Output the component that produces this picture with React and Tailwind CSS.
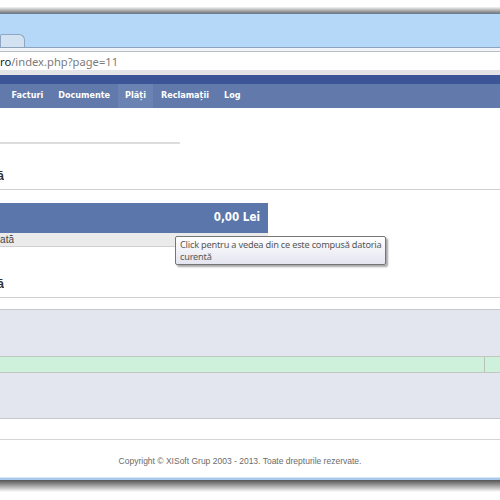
import React from 'react';

const navItems = ['Facturi', 'Documente', 'Plăți', 'Reclamații', 'Log'];

const Cut = ({ text, width, className }) => (
    <div className={`flex justify-end overflow-hidden ${width}`}>
        <span className={`whitespace-nowrap ${className}`}>{text}</span>
    </div>
);

const App = () => {
    return (
        <div className="w-[500px] h-[500px] overflow-hidden bg-white flex flex-col" style={{ fontFamily: '"Liberation Sans", Arial, sans-serif' }}>
            {/* window chrome */}
            <div className="h-[13px] bg-gradient-to-b from-white via-white to-[#7d7d7d]" />
            <div className="h-[34px] bg-[#b5d7f8] border-t border-[#6d7f94] flex items-end">
                <div className="w-[25px] h-[13px] bg-[#d3e2f1] border border-b-0 border-[#8ea6c2] rounded-tr-[6px] rounded-tl-[2px]" />
            </div>
            <div className="h-[4px] bg-[#f1f4f8] border-t border-[#8da3bd]" />
            <div className="h-[19px] bg-white border-t border-[#b9bec6] flex items-center text-[11.2px] leading-none pt-[1px]" style={{ fontFamily: '"Noto Sans", sans-serif' }}>
                <span className="text-[#1a1a1a]">ro</span>
                <span className="text-[#7b7b7b]">/index.php?page=11</span>
            </div>
            <div className="h-[5px] bg-[#e3e3e8]" />

            {/* site header */}
            <div className="h-[9px] bg-[#3b5597]" />
            <div className="h-[24px] bg-[#6179ab] flex pl-[4px] text-white font-bold text-[9px]" style={{ fontFamily: '"DejaVu Sans Condensed", "DejaVu Sans", sans-serif' }}>
                {navItems.map((item) => (
                    <div
                        key={item}
                        className={`flex items-center px-[7.5px] ${item === 'Plăți' ? 'bg-[#6b83b3]' : ''}`}
                    >
                        {item}
                    </div>
                ))}
            </div>

            {/* content */}
            <div className="h-[34px]" />
            <div className="w-[180px] h-[2px] bg-[#dcdcdc]" />
            <div className="h-[23px]" />
            <Cut text="Datorii curentă" width="w-[4px]" className="font-bold text-[12px] text-[#333]" />
            <div className="h-[4px]" />
            <div className="h-[1px] bg-[#d0d0d0]" />
            <div className="h-[13px]" />

            <div className="relative w-[268px]">
                <div className="h-[30px] bg-[#5b76aa] flex items-center justify-end pr-[8px] text-white font-bold text-[11.5px]" style={{ fontFamily: '"DejaVu Sans Condensed", "DejaVu Sans", sans-serif' }}>
                    0,00 Lei
                </div>
                <div className="h-[14px] bg-[#ebebeb] border-b border-[#cfcfcf] flex items-center">
                    <Cut text="Datoria calculată" width="w-[14px]" className="text-[10px] text-[#444]" />
                </div>
                <div className="absolute left-[175px] top-[33px] w-[211px] h-[29px] border border-[#767676] rounded-[2px] bg-gradient-to-b from-white to-[#e4e5f0] shadow-[2px_2px_2px_rgba(0,0,0,0.35)] px-[4px] pt-[2px] text-[9.2px] tracking-[-0.2px] leading-[12px] text-[#575757] whitespace-nowrap" style={{ fontFamily: '"Noto Sans", sans-serif' }}>
                    Click pentru a vedea din ce este compusă datoria
                    <br />
                    curentă
                </div>
            </div>

            <div className="h-[28px]" />
            <Cut text="Plăți efectuată" width="w-[4px]" className="font-bold text-[12px] text-[#333]" />
            <div className="h-[4px]" />
            <div className="h-[1px] bg-[#d0d0d0]" />
            <div className="h-[11px]" />

            <div className="h-[110px] bg-[#e3e6ef] border-t border-b border-[#c6c8cc] flex flex-col">
                <div className="h-[46px]" />
                <div className="h-[17px] bg-[#cdf1da] border-t border-b border-[#bfc9c2] flex">
                    <div className="w-[485px] border-r border-[#b8c2bb]" />
                </div>
            </div>
            <div className="h-[20px]" />
            <div className="h-[1px] bg-[#d4d4d4]" />
            <div className="h-[37px] flex items-center justify-center pt-[5px] text-[8.5px] text-[#6b6b6b]">
                <span className="mr-[20px]">Copyright © XISoft Grup 2003 - 2013. Toate drepturile rezervate.</span>
            </div>
            <div className="h-[3px] bg-[#a8c8ec] border-t border-[#d6e6f7]" />
            <div className="h-[12px] bg-gradient-to-b from-[#555] to-white" />
        </div>
    );
};

export default App;
